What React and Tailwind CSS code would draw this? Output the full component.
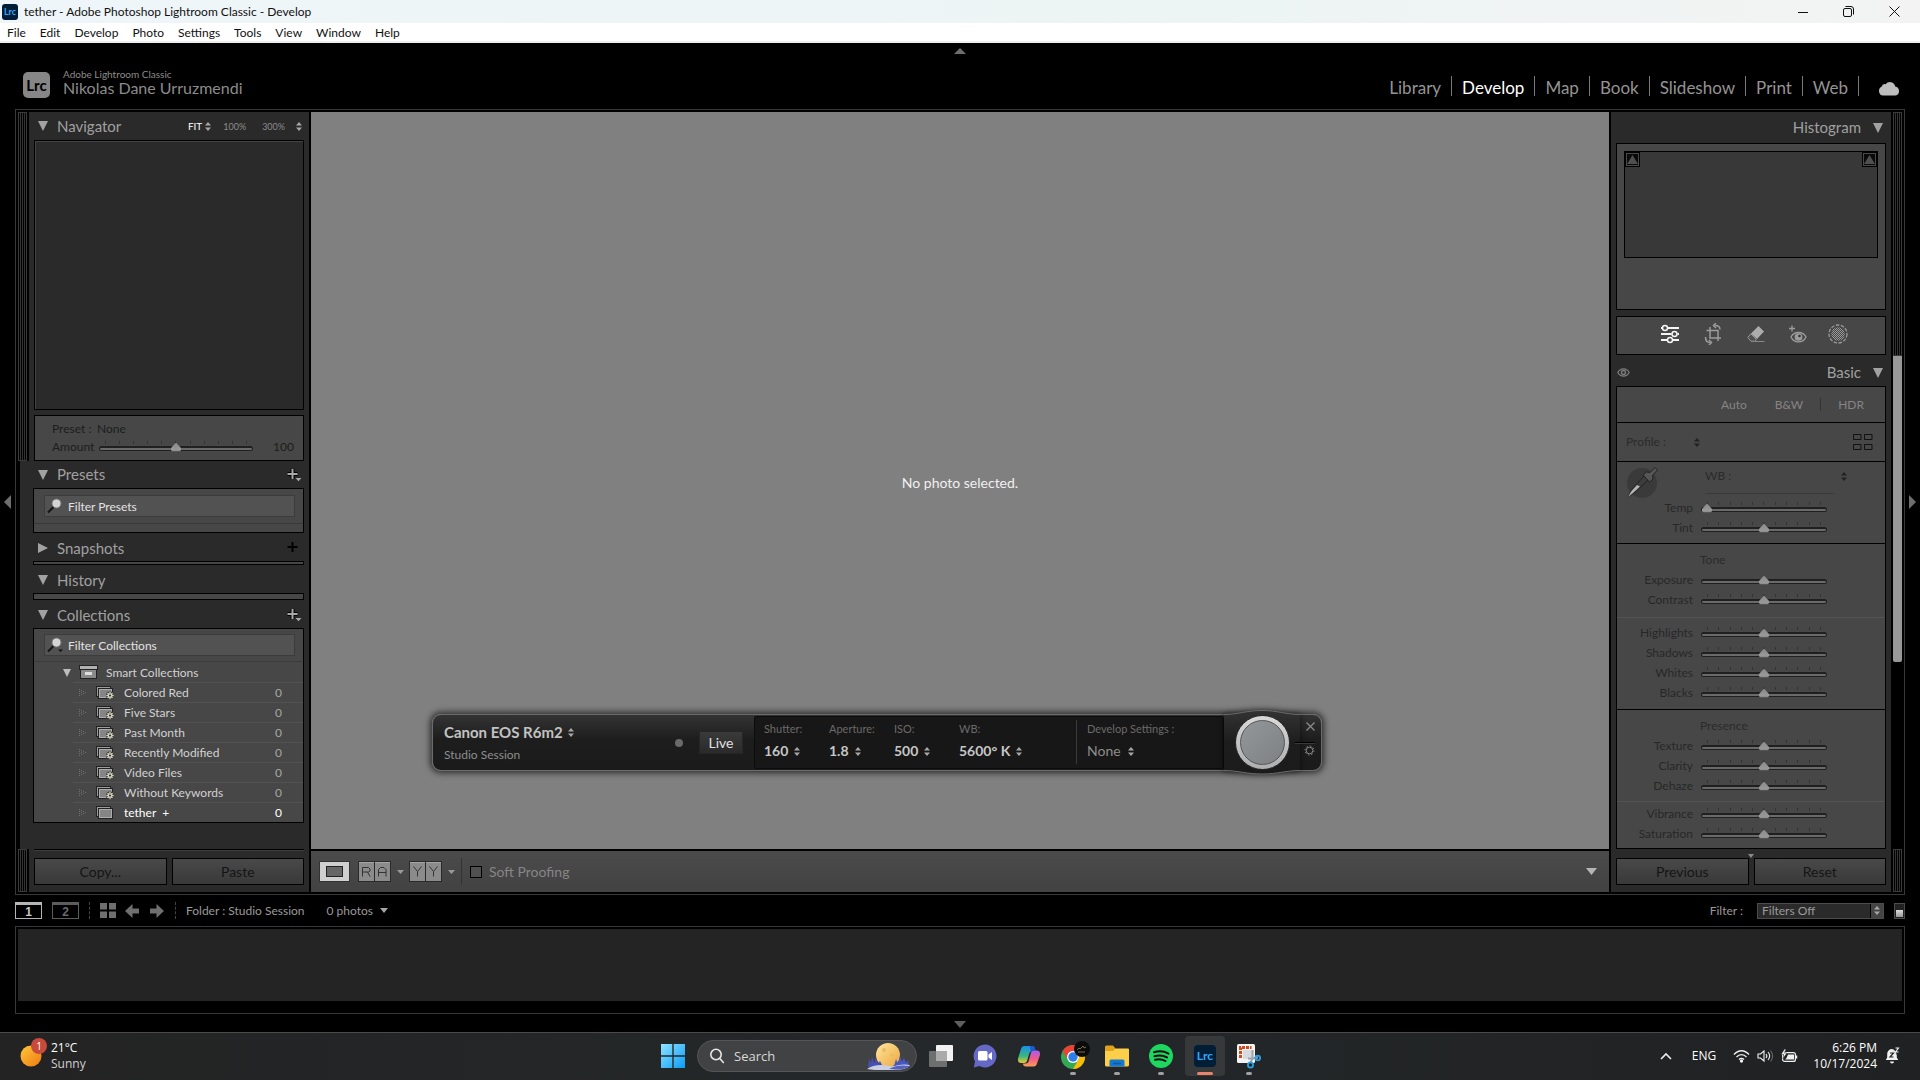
import React from "react";

const MENU = ["File", "Edit", "Develop", "Photo", "Settings", "Tools", "View", "Window", "Help"];
const MODULES = ["Library", "Develop", "Map", "Book", "Slideshow", "Print", "Web"];
const SMART = ["Colored Red", "Five Stars", "Past Month", "Recently Modified", "Video Files", "Without Keywords"];
const TICKS = [0, 1, 2, 3, 4, 5, 6, 7, 8, 9, 10];

function TitleBar() {
  return (
    <div className="flex h-[23px] shrink-0 items-center bg-[linear-gradient(90deg,#eff6f9,#ecf4f4_60%,#f3f3f3)] text-[#111]">
      <span className="ml-[2px] flex size-4 items-center justify-center rounded-[3px] bg-[#001e36] text-[9px] font-bold leading-none text-[#31a8ff]">
        Lrc
      </span>
      <span className="ml-[6px] grow text-[12px] leading-none">tether - Adobe Photoshop Lightroom Classic - Develop</span>
      <div className="flex items-center gap-[35px] pr-5">
        <button aria-label="Minimize">
          <svg width="10" height="10" viewBox="0 0 10 10" stroke="#111"><path d="M0 5.500h10" /></svg>
        </button>
        <button aria-label="Restore">
          <svg width="11" height="11" viewBox="0 0 11 11" fill="none" stroke="#111">
            <rect x=".5" y="2.500" width="8" height="8" rx="1.500" />
            <path d="M2.500 .5h5.500a2.500 2.500 0 0 1 2.500 2.500v5.500" />
          </svg>
        </button>
        <button aria-label="Close">
          <svg width="11" height="11" viewBox="0 0 11 11" stroke="#111"><path d="M.5 .5l10 10M10.500 .5l-10 10" /></svg>
        </button>
      </div>
    </div>
  );
}

function MenuBar() {
  return (
    <nav className="flex h-5 shrink-0 items-center gap-[14px] border-b-2 border-[#efefef] bg-white px-[7px] pt-[2px] text-[12px] leading-none text-[#111]">
      {MENU.map((m) => (
        <button key={m}>{m}</button>
      ))}
    </nav>
  );
}

function Header() {
  return (
    <header className="grid h-[66px] shrink-0 grid-cols-[1fr_auto_1fr] bg-black">
      <div className="flex items-start gap-[13px] pl-[23px] pt-[25px]">
        <span className="mt-1 flex h-[26px] w-[27px] items-center justify-center rounded-[5px] bg-[#868686] text-[15px] font-bold leading-none text-black">
          Lrc
        </span>
        <div className="text-[#8c8c8c]">
          <div className="text-[10px] leading-[12px]">Adobe Lightroom Classic</div>
          <div className="text-[16px] leading-[16px]">Nikolas Dane Urruzmendi</div>
        </div>
      </div>
      <button aria-label="Hide module picker" className="h-4 px-2">
        <svg width="12" height="6" viewBox="0 0 12 6" fill="#6e6e6e"><path d="M6 0l6 6H0z" /></svg>
      </button>
      <div className="flex items-start justify-end pr-5 pt-[33px]">
        {MODULES.map((m) => (
          <div key={m} className="flex h-5 border-r border-[#7a7a7a]">
            <button className={m === "Develop" ? "px-[10px] pt-[2px] text-[17px] leading-[20px] text-white" : "px-[10px] pt-[2px] text-[17px] leading-[20px] text-[#949494]"}>
              {m}
            </button>
          </div>
        ))}
        <button aria-label="Cloud sync" className="ml-[19px] mt-1">
          <svg width="22" height="16" viewBox="0 0 22 16" fill="#bdbdbd">
            <path d="M5 15.500A4.600 4.600 0 0 1 3.600 6.800 3.400 3.400 0 0 1 7.600 4.200 5.400 5.400 0 0 1 17.200 6.500 4.600 4.600 0 0 1 17.500 15.500z" />
          </svg>
        </button>
      </div>
    </header>
  );
}

const Stripes = ({ className }) => (
  <div className={"w-[9px] border border-[#3a3a3a] bg-[repeating-linear-gradient(90deg,#000_0_1px,#333_1px_2px)] " + className} />
);

function Tri({ dir = "down" }) {
  return (
    <svg width="10" height="10" viewBox="0 0 10 10" fill="#a2a2a2">
      {dir === "down" ? <path d="M0 0h10L5 10z" /> : <path d="M0 0l10 5-10 5z" />}
    </svg>
  );
}

function UpDown({ color = "#a8a8a8" }) {
  return (
    <svg width="6" height="9" viewBox="0 0 6 9" fill={color} className="shrink-0">
      <path d="M3 0l3 3.500H0zM3 9L0 5.500h6z" />
    </svg>
  );
}

function Plus({ menu }) {
  return (
    <svg width="16" height="14" viewBox="0 0 16 14">
      {menu && <path d="M6.500 1v10M1.500 6h10" stroke="#000" strokeWidth="4" />}
      <path d="M6.500 1v10M1.500 6h10" stroke={menu ? "#a8a8a8" : "#000"} strokeWidth="2" />
      {menu && <path d="M9.500 10h6l-3 3.300z" fill="#a8a8a8" />}
    </svg>
  );
}

function SectionHead({ title, open = true, children, className = "h-7 pl-[5px] pt-[2px]" }) {
  return (
    <div className={"flex items-center " + className}>
      <button className="flex items-center gap-[9px] text-[15px] leading-none text-[#a0a0a0]">
        <Tri dir={open ? "down" : "right"} />
        {title}
      </button>
      <div className="ml-auto flex items-center">{children}</div>
    </div>
  );
}

function Slider({ label, value = 50, ticks = true, width = "w-[126px]" }) {
  return (
    <div className={"relative h-5 " + width}>
      {ticks && (
        <div className="absolute inset-x-[6px] top-[4px] flex justify-between">
          {TICKS.map((t) => (
            <i key={t} className="h-[3px] w-px bg-[#333]" />
          ))}
        </div>
      )}
      <input
        id={label}
        type="range"
        defaultValue={value}
        className="relative block h-[22px] w-full appearance-none bg-transparent [&::-webkit-slider-runnable-track]:h-[5px] [&::-webkit-slider-runnable-track]:rounded-full [&::-webkit-slider-runnable-track]:border [&::-webkit-slider-runnable-track]:border-t-2 [&::-webkit-slider-runnable-track]:border-[#202020] [&::-webkit-slider-runnable-track]:bg-[#6a6a6a] [&::-webkit-slider-thumb]:-mt-[5px] [&::-webkit-slider-thumb]:h-[9px] [&::-webkit-slider-thumb]:w-[10px] [&::-webkit-slider-thumb]:appearance-none [&::-webkit-slider-thumb]:bg-[linear-gradient(#8a8a8a,#9a9a9a_80%,#555)] [&::-webkit-slider-thumb]:[clip-path:polygon(50%_0,100%_60%,100%_85%,85%_100%,15%_100%,0_85%,0_60%)]"
      />
    </div>
  );
}

function SliderRow({ label, value, ticks }) {
  return (
    <div className="flex h-5 items-center">
      <label htmlFor={label} className="mr-2 w-[76px] text-right text-[12px] leading-none text-[#272727]">
        {label}
      </label>
      <Slider label={label} value={value} ticks={ticks} />
    </div>
  );
}

function FilterField({ label, menu }) {
  return (
    <div className="ml-[10px] mr-2 flex h-[22px] items-center border border-[#3c3c3c] bg-[#525252] pl-[2px]">
      <svg width="16" height="16" viewBox="0 0 16 16" className="shrink-0">
        <path d="M1 14.500l6-6" stroke="#161616" strokeWidth="2.200" />
        <circle cx="9.500" cy="5.500" r="4.500" fill="#d4d4d4" stroke="#777" />
        {menu && <path d="M11 12.500h5l-2.500 2.500z" fill="#111" />}
      </svg>
      <input
        aria-label={label}
        placeholder={label}
        className="ml-[5px] w-0 grow bg-transparent text-[12px] leading-none text-[#e2e2e2] outline-none placeholder:text-[#e2e2e2]"
      />
    </div>
  );
}

function CollectionIcon({ smart }) {
  return (
    <svg width="20" height="15" viewBox="0 0 20 15">
      <rect x=".5" y="1.500" width="14" height="10" fill="#9c9c9c" stroke="#222" />
      <rect x="2.500" y="3.500" width="14" height="10" fill="#858585" stroke="#222" />
      <rect x="3.500" y="4.500" width="12" height="8" fill="none" stroke="#adadad" />
      {smart && (
        <g>
          <circle cx="14" cy="10.500" r="4" fill="#333" />
          <path d="M14 6.800v7.400M10.300 10.500h7.400M11.500 8l5 5M16.500 8l-5 5" stroke="#d6d6c0" strokeWidth="1.300" />
          <circle cx="14" cy="10.500" r="1.100" fill="#333" />
        </g>
      )}
    </svg>
  );
}

function CollectionRow({ name, smart, active }) {
  return (
    <div className="ml-[39px] flex h-5 items-center border-t border-[#525252] pl-[6px] pr-[21px] text-[12px] leading-none">
      <svg width="8" height="8" viewBox="0 0 8 8" fill="#6f6f6f">
        <path d="M0 0h1v1H0zM0 2h1v1H0zM0 4h1v1H0zM0 6h1v1H0zM2 1h1v1H2zM2 3h1v1H2zM2 5h1v1H2zM4 2h1v1H4zM4 4h1v1H4zM6 3h1v1H6z" />
      </svg>
      <span className="ml-[9px] w-7">
        <CollectionIcon smart={smart} />
      </span>
      <span className={active ? "grow text-white" : "grow text-[#d2d2d2]"}>{name}</span>
      <span className={active ? "text-white" : "text-[#a6a6a6]"}>0</span>
    </div>
  );
}

const panelButton =
  "h-[27px] flex-1 border border-black bg-[linear-gradient(#494949,#393939)] text-[14px] leading-none text-[#151515]";

function LeftPanel() {
  return (
    <aside className="flex w-[291px] shrink-0 flex-col bg-black">
      <div className="flex">
        <Stripes className="mr-[2px]" />
        <div className="grow bg-[#2a2a2a] px-[5px]">
          <SectionHead title="Navigator" className="h-7 pl-1">
            <div className="flex items-center pr-[2px] text-[9px] leading-none text-[#8a8a8a]">
              <button className="flex items-center gap-[3px] text-[10px] text-white">
                FIT <UpDown />
              </button>
              <button className="ml-3">100%</button>
              <button className="ml-4 flex items-center gap-[11px]">
                300% <UpDown />
              </button>
            </div>
          </SectionHead>
          <div className="h-[270px] border border-black bg-[#2a2a2a] shadow-[inset_1px_1px_0_#444]" />
          <div className="mt-[5px] flex h-[46px] flex-col border border-black bg-[#474747] pl-[17px] pt-[4px] text-[12px] leading-none text-[#1d1d1d]">
            <div className="flex h-[18px] items-center">
              <span className="w-[45px]">Preset :</span>None
            </div>
            <div className="flex h-[18px] items-center">
              <label htmlFor="Preset amount" className="w-[47px]">Amount</label>
              <Slider label="Preset amount" width="w-[154px]" />
              <span className="ml-5">100</span>
            </div>
          </div>
        </div>
      </div>
      <div className="ml-[2px] grow bg-[#2a2a2a] pl-[13px] pr-[5px]">
        <SectionHead title="Presets" className="h-[27px] pl-[5px]">
          <button aria-label="Add preset" className="pr-[2px]"><Plus menu /></button>
        </SectionHead>
        <div className="h-[45px] border border-black bg-[#474747] pt-[6px]">
          <FilterField label="Filter Presets" />
          <div className="mt-[6px] border-t border-[#393939]" />
        </div>
        <SectionHead title="Snapshots" open={false}>
          <button aria-label="Add snapshot" className="pr-[2px]"><Plus /></button>
        </SectionHead>
        <div className="h-1 border border-black bg-[#474747]" />
        <SectionHead title="History" />
        <div className="h-[7px] border border-black bg-[#474747]" />
        <SectionHead title="Collections">
          <button aria-label="Add collection" className="pr-[2px]"><Plus menu /></button>
        </SectionHead>
        <div className="border border-black bg-[#474747] pt-[5px]">
          <FilterField label="Filter Collections" menu />
          <div className="mt-[5px] flex h-[21px] items-center border-t border-[#3c3c3c] pl-[29px] pt-px text-[12px] leading-none text-[#d2d2d2]">
            <svg width="8" height="8" viewBox="0 0 8 8" fill="#bdbdbd"><path d="M0 0h8L4 8z" /></svg>
            <svg width="19" height="15" viewBox="0 0 19 15" className="ml-[8px] mr-[8px]">
              <rect x=".5" y=".5" width="18" height="4" fill="#b0b0b0" stroke="#222" />
              <rect x="1.500" y="4.500" width="16" height="9" fill="#8a8a8a" stroke="#222" />
              <rect x="6" y="7" width="7" height="3" fill="#ddd" />
            </svg>
            Smart Collections
          </div>
          {SMART.map((n) => (
            <CollectionRow key={n} name={n} smart />
          ))}
          <CollectionRow name={<>tether&nbsp; +</>} active />
        </div>
      </div>
      <div className="flex h-[43px] shrink-0">
        <Stripes className="mr-[2px]" />
        <div className="grow bg-[#2a2a2a] px-[5px]">
          <div className="flex gap-[5px] border-t border-black pt-2 shadow-[inset_0_1px_0_#3c3c3c]">
            <button className={panelButton}>Copy...</button>
            <button className={panelButton}>Paste</button>
          </div>
        </div>
      </div>
    </aside>
  );
}

function TetherValue({ label, value, className, light }) {
  return (
    <div className={"flex flex-col " + className}>
      <span className="text-[11px] leading-[14px] text-[#6a6a6a]">{label}</span>
      <button className={light ? "mt-[6px] flex items-center gap-[7px] text-[14px] leading-[18px] text-[#8d8d8d]" : "mt-[6px] flex items-center gap-[6px] text-[14px] font-bold leading-[18px] text-[#c6c6c6]"}>
        {value} <UpDown />
      </button>
    </div>
  );
}

function TetherBar() {
  return (
    <div className="absolute bottom-[78px] left-[121px] flex h-[57px] w-[890px] rounded-[9px] border border-[#6b6b6b] bg-[linear-gradient(#333,#1d1d1d_45%,#1b1b1b)] shadow-[0_0_6px_2px_rgba(0,0,0,0.65)]">
      <div className="flex w-[321px] items-center pl-[11px] pr-[11px]">
        <div className="flex grow flex-col gap-[6px]">
          <button className="flex items-center gap-[5px] text-[15px] font-bold leading-[18px] text-[#c2c2c2]">
            Canon EOS R6m2 <UpDown />
          </button>
          <span className="text-[12px] leading-[15px] text-[#8d8d8d]">Studio Session</span>
        </div>
        <i className="size-2 rounded-full bg-[#6a6a6a]" />
        <button className="ml-4 h-[23px] w-[44px] border border-[#262626] bg-[linear-gradient(#3a3a3a,#2a2a2a)] text-[14px] leading-none text-[#e0e0e0]">
          Live
        </button>
      </div>
      <div className="my-px flex w-[470px] rounded-[2px] border border-[#0c0c0c] bg-[#171717] pl-[9px] pt-[5px]">
        <TetherValue className="w-[65px]" label="Shutter:" value="160" />
        <TetherValue className="w-[65px]" label="Aperture:" value="1.8" />
        <TetherValue className="w-[65px]" label="ISO:" value="500" />
        <TetherValue className="w-[117px]" label="WB:" value="5600° K" />
        <div className="-mt-[2px] mb-1 mr-[10px] w-px bg-[#3a3a3a]" />
        <TetherValue label="Develop Settings :" value="None" light />
      </div>
      <div className="relative flex grow items-center">
        <svg width="76" height="66" viewBox="0 0 76 66" className="absolute -top-[6px] left-0 drop-shadow-[0_0_3px_rgba(0,0,0,0.6)]">
          <path d="M0 5.500C14 5.500 22 1.500 38 1.500S62 5.500 76 5.500V61.500C62 61.500 54 65 38 65S14 61.500 0 61.500z" fill="url(#bump)" />
          <path d="M0 5.500C14 5.500 22 1.500 38 1.500S62 5.500 76 5.500M76 61.500C62 61.500 54 65 38 65S14 61.500 0 61.500" fill="none" stroke="#6b6b6b" />
          <defs>
            <linearGradient id="bump" x2="0" y2="1">
              <stop stopColor="#333" />
              <stop offset=".5" stopColor="#1d1d1d" />
              <stop offset="1" stopColor="#1b1b1b" />
            </linearGradient>
          </defs>
        </svg>
        <button
          aria-label="Capture"
          className="relative ml-[11px] size-[55px] rounded-full border border-[#2a2a2a] bg-[linear-gradient(#d9d9d9,#aeaeae)] p-1"
        >
          <span className="block size-full rounded-full border border-[#555] bg-[linear-gradient(135deg,#93979a,#7d8184)]" />
        </button>
        <div className="relative mb-2 ml-[5px] flex w-5 flex-col items-end">
          <button aria-label="Close tether bar">
            <svg width="9" height="9" viewBox="0 0 9 9" stroke="#8a8a8a" strokeWidth="1.300"><path d="M.5 .5l8 8M8.500 .5l-8 8" /></svg>
          </button>
          <div className="mb-px mt-[11px] h-[2px] w-full border-b border-[#3a3a3a] bg-black" />
          <button aria-label="Camera settings">
            <svg width="11" height="11" viewBox="0 0 11 11" fill="none" stroke="#8a8a8a">
              <circle cx="5.500" cy="5.500" r="3.300" />
              <circle cx="5.500" cy="5.500" r="4.500" strokeDasharray="1.500 2" />
            </svg>
          </button>
        </div>
      </div>
    </div>
  );
}

const MenuTri = ({ color = "#9a9a9a" }) => (
  <svg width="7" height="4" viewBox="0 0 7 4" fill={color}><path d="M0 0h7L3.500 4z" /></svg>
);

function SplitIcon({ kind }) {
  const glyph = kind === "RA"
    ? "M4.500 15.500V6.500H10.500L12 8V10L10.500 11H4.500M9.500 11L12 15.500M20.500 15.500V8.500L22.500 6.500H26L28 8.500V15.500M20.500 11.500H28"
    : "M4.500 5.500L8.500 10.500L12.500 5.500M8.500 10.500V15.500M20.500 5.500L24.500 10.500L28.500 5.500M24.500 10.500V15.500";
  return (
    <svg width="33" height="21" viewBox="0 0 33 21">
      <rect x=".5" y=".5" width="32" height="20" fill="#8b8b8b" stroke="#2a2a2a" />
      <path d="M1 1.500h31" stroke="#a5a5a5" />
      <path d="M16.500 0v21" stroke="#2a2a2a" />
      <path d={glyph} fill="none" stroke="#333" />
    </svg>
  );
}

function Canvas() {
  return (
    <main className="relative mx-[2px] flex grow flex-col">
      <div className="flex grow items-center justify-center bg-[#808080] pt-[5px] text-[14px] leading-none text-[#f0f0f0]">
        No photo selected.
      </div>
      <div className="relative h-0">
        <TetherBar />
      </div>
      <div className="mt-[2px] flex h-[41px] shrink-0 items-center bg-[linear-gradient(#4b4b4b,#424242)] pl-2">
        <button aria-label="Loupe view">
          <svg width="31" height="21" viewBox="0 0 31 21">
            <rect x=".5" y=".5" width="30" height="20" fill="#cfcfcf" stroke="#333" />
            <rect x="7.500" y="5.500" width="16" height="10" fill="#666" stroke="#222" />
          </svg>
        </button>
        <button aria-label="Reference view" className="ml-2"><SplitIcon kind="RA" /></button>
        <button aria-label="Reference view options" className="ml-[6px]"><MenuTri /></button>
        <button aria-label="Before and after" className="ml-[5px]"><SplitIcon kind="YY" /></button>
        <button aria-label="Before and after options" className="ml-[6px]"><MenuTri /></button>
        <i className="ml-[6px] h-[27px] w-px bg-[#333]" />
        <label className="ml-2 flex items-center gap-[7px] text-[14px] leading-none text-[#868686]">
          <input type="checkbox" className="size-3 appearance-none border border-black bg-[#505050]" />
          Soft Proofing
        </label>
        <button aria-label="Toolbar options" className="ml-auto mr-3">
          <svg width="11" height="7" viewBox="0 0 11 7" fill="#b5b5b5"><path d="M0 0h11L5.500 7z" /></svg>
        </button>
      </div>
    </main>
  );
}

const ClipMark = () => (
  <button aria-label="Clipping" className="flex size-[15px] items-center justify-center border border-black bg-[#0a0a0a] shadow-[inset_0_0_0_1px_#4a4a4a]">
    <svg width="11" height="9" viewBox="0 0 11 9" fill="#4f4f4f"><path d="M5.500 0L11 9H0z" /></svg>
  </button>
);

const Eye = () => (
  <svg width="13" height="9" viewBox="0 0 13 9" fill="none" stroke="#7d7d7d">
    <path d="M.8 4.500C3.500 -.3 9.500 -.3 12.200 4.500 9.500 9.300 3.500 9.300 .8 4.500z" strokeWidth="1.200" />
    <circle cx="6.500" cy="4.500" r="2" strokeWidth="1.400" />
  </svg>
);

function RightHead({ title, eye, className }) {
  return (
    <div className={"flex items-center pr-[3px] " + className}>
      {eye && <button aria-label="Toggle panel" className="pl-px"><Eye /></button>}
      <button className="ml-auto flex items-center gap-[12px] text-[15px] leading-none text-[#a0a0a0]">
        {title} <Tri />
      </button>
    </div>
  );
}

function ToolStrip() {
  return (
    <div className="mt-[6px] flex h-[39px] items-center border border-black bg-[#474747] pb-[3px] pl-[43px]">
      <button aria-label="Edit">
        <svg width="20" height="20" viewBox="0 0 20 20" fill="none" stroke="#f4f4f4" strokeWidth="2">
          <path d="M1 4h1.500M8 4h11M1 10h10.500M17.500 10h1.500M1 16h6M13 16h6" />
          <circle cx="5" cy="4" r="2.500" strokeWidth="1.500" />
          <circle cx="14.500" cy="10" r="2.500" strokeWidth="1.500" />
          <circle cx="10" cy="16" r="2.500" strokeWidth="1.500" />
        </svg>
      </button>
      <button aria-label="Crop" className="ml-[24px]">
        <svg width="20" height="22" viewBox="0 0 20 22" fill="none" stroke="#9c9c9c" strokeWidth="1.500">
          <path d="M6 4v11h11M2.500 7.500h11.500v10.500" />
          <path d="M11 2.500c3 0 5 1 5 4" />
          <path d="M12 0L9.500 2.500 12 5" />
          <path d="M1.500 14c0 4 1.500 5.500 4.500 5.500" />
          <path d="M5 17l2.500 2.500L5 22" />
        </svg>
      </button>
      <button aria-label="Remove" className="ml-[22px]">
        <svg width="20" height="20" viewBox="0 0 20 20">
          <path d="M12.500 2l5.500 5.500-7 7.500L5 9.500z" fill="#acacac" />
          <path d="M4.800 9.800l5.600 5.400-1.600 2.100H5L1.800 13.500z" fill="#505050" stroke="#999" />
          <path d="M9 17.500h9.500" stroke="#888" />
        </svg>
      </button>
      <button aria-label="Red eye" className="ml-[23px]">
        <svg width="18" height="20" viewBox="0 0 18 20" fill="none" stroke="#9c9c9c" strokeWidth="1.300">
          <path d="M0 4.500h6M3 1.500v6" />
          <path d="M2 13C5 7 14 7 17 13 14 19.500 5 19.500 2 13z" />
          <circle cx="9.500" cy="13" r="3.200" fill="#9c9c9c" />
          <circle cx="10.500" cy="12" r="1.300" fill="#333" stroke="none" />
        </svg>
      </button>
      <button aria-label="Masking" className="ml-[20px]">
        <svg width="22" height="22" viewBox="0 0 22 22">
          <defs>
            <pattern id="mask" width="2" height="2" patternUnits="userSpaceOnUse">
              <path d="M0 0h1v1H0zM1 1h1v1H1z" fill="#999" />
            </pattern>
          </defs>
          <circle cx="11" cy="11" r="9" fill="none" stroke="#9a9a9a" strokeWidth="1.300" strokeDasharray="3.500 1.500" />
          <circle cx="11" cy="11" r="6.800" fill="url(#mask)" />
        </svg>
      </button>
    </div>
  );
}

function Dropper() {
  return (
    <svg width="32" height="32" viewBox="0 0 32 32">
      <circle cx="16" cy="17" r="15" fill="#3a3a3a" />
      <path d="M18 10l4 4L8 27l-6 4 3.500-7z" fill="#3d3d3d" stroke="#222" />
      <path d="M11 19l3 1.500L7 27l-5 4 3.500-6z" fill="#b4b4b4" />
      <path d="M17 9l3.500-3 3.500.5L29 1.500l2.500 2.500-5 5.500.5 3.500-3.500 3z" fill="#555" stroke="#222" />
    </svg>
  );
}

function BasicPanel() {
  return (
    <div className="border border-black bg-[#474747] text-[12px] leading-none text-[#2b2b2b]">
      <div className="flex h-[35px] items-center justify-end pr-[21px] text-[#858585]">
        <button>Auto</button>
        <button className="ml-[28px]">B&amp;W</button>
        <i className="ml-[17px] h-[13px] w-px bg-[#333]" />
        <button className="ml-[17px]">HDR</button>
      </div>
      <div className="flex h-[39px] items-center border-t border-black pl-[9px] pr-[12px]">
        <span className="w-[68px]">Profile :</span>
        <UpDown color="#222" />
        <button aria-label="Profile browser" className="ml-auto">
          <svg width="20" height="17" viewBox="0 0 20 17" fill="none" stroke="#111">
            <path d="M.5 .5h7.500v5H.5zM11.500 .5h7.500v5h-7.500zM.5 10.500h7.500v5H.5zM11.500 10.500h7.500v5h-7.500z" />
          </svg>
        </button>
      </div>
      <div className="border-t border-black pb-[5px]">
        <div className="flex h-9 items-start pl-[9px] pr-[37px]">
          <button aria-label="White balance selector" className="mt-1"><Dropper /></button>
          <div className="ml-[47px] flex h-[32px] grow items-center justify-between border-b border-[#3a3a3a] pb-1">
            WB :
          </div>
          <span className="ml-[7px] mt-[10px] w-[7px]"><UpDown color="#222" /></span>
        </div>
        <SliderRow label="Temp" value={0} />
        <SliderRow label="Tint" />
      </div>
      <div className="border-t border-black pt-[6px]">
        <div className="flex h-5 items-center pl-[83px]">Tone</div>
        <SliderRow label="Exposure" ticks={false} />
        <SliderRow label="Contrast" />
        <div className="mb-[5px] mt-[7px] border-t border-[#535353]" />
        {["Highlights", "Shadows", "Whites", "Blacks"].map((s) => (
          <SliderRow key={s} label={s} />
        ))}
      </div>
      <div className="mt-[6px] border-t border-black pb-[4px] pt-[6px]">
        <div className="flex h-5 items-center pl-[83px]">Presence</div>
        {["Texture", "Clarity", "Dehaze"].map((s) => (
          <SliderRow key={s} label={s} />
        ))}
        <div className="mb-[2px] mt-[5px] border-t border-[#535353]" />
        <SliderRow label="Vibrance" />
        <SliderRow label="Saturation" />
      </div>
    </div>
  );
}

function RightPanel() {
  return (
    <aside className="flex w-[291px] shrink-0 bg-black">
      <div className="flex grow flex-col bg-[#2a2a2a] px-[5px]">
        <RightHead title="Histogram" className="h-[31px]" />
        <div className="h-[167px] border border-black bg-[#474747] p-[7px]">
          <div className="flex h-[107px] items-start justify-between border border-black bg-[#383838]">
            <ClipMark />
            <ClipMark />
          </div>
        </div>
        <ToolStrip />
        <RightHead title="Basic" eye className="h-[31px] pt-[4px]" />
        <BasicPanel />
        <div className="mt-auto flex h-[42px] flex-col items-center pt-[4px]">
          <svg width="6" height="4" viewBox="0 0 6 4" fill="#8a8a8a"><path d="M0 0h6L3 4z" /></svg>
          <div className="flex w-full gap-[5px]">
            <button className={panelButton}>Previous</button>
            <button className={panelButton}>Reset</button>
          </div>
        </div>
      </div>
      <div className="ml-[2px] flex w-[9px] flex-col">
        <Stripes className="h-[244px]" />
        <div className="h-[306px] rounded-b-[2px] bg-[#989898]" />
        <div className="grow" />
        <Stripes className="h-[43px]" />
      </div>
    </aside>
  );
}

function Workspace() {
  return (
    <div className="flex grow bg-black">
      <button aria-label="Hide left panel" className="flex w-[15px] shrink-0 items-center justify-end pr-1">
        <svg width="7" height="14" viewBox="0 0 7 14" fill="#6e6e6e"><path d="M7 0v14L0 7z" /></svg>
      </button>
      <div className="flex grow border border-[#383838] p-[2px]">
        <LeftPanel />
        <Canvas />
        <RightPanel />
      </div>
      <button aria-label="Hide right panel" className="flex w-[15px] shrink-0 items-center pl-1">
        <svg width="7" height="14" viewBox="0 0 7 14" fill="#6e6e6e"><path d="M0 0v14l7-7z" /></svg>
      </button>
    </div>
  );
}

function WindowButton({ n, active }) {
  return (
    <button className={active ? "flex h-[17px] w-[27px] items-center justify-center border border-t-[3px] border-[#b5b5b5] font-['Liberation_Sans',sans-serif] text-[12px] font-bold leading-none text-[#c8c8c8]" : "flex h-[17px] w-[27px] items-center justify-center border border-t-[3px] border-[#5c5c5c] font-['Liberation_Sans',sans-serif] text-[12px] font-bold leading-none text-[#6a6a6a]"}>
      {n}
    </button>
  );
}

function Filmstrip() {
  return (
    <div className="shrink-0 bg-black px-[15px]">
      <div className="flex h-[31px] items-center text-[12px] leading-none text-[#9a9a9a]">
        <WindowButton n="1" active />
        <span className="w-[10px]" />
        <WindowButton n="2" />
        <i className="ml-[10px] h-[17px] border-l border-dashed border-[#444]" />
        <button aria-label="Grid view" className="ml-[10px]">
          <svg width="16" height="15" viewBox="0 0 16 15" fill="#6f6f6f"><path d="M0 0h7v6.500H0zM9 0h7v6.500H9zM0 8.500h7V15H0zM9 8.500h7V15H9z" /></svg>
        </button>
        <button aria-label="Go back" className="ml-[9px]">
          <svg width="14" height="14" viewBox="0 0 14 14" fill="#6f6f6f"><path d="M7.500 0v4.500H14v5H7.500V14L0 7z" /></svg>
        </button>
        <button aria-label="Go forward" className="ml-[11px]">
          <svg width="14" height="14" viewBox="0 0 14 14" fill="#6f6f6f"><path d="M6.500 0v4.500H0v5h6.500V14L14 7z" /></svg>
        </button>
        <i className="ml-[11px] h-[17px] border-l border-dashed border-[#444]" />
        <span className="ml-[10px]">Folder : Studio Session</span>
        <button className="ml-[22px] flex items-center gap-[7px]">
          0 photos
          <svg width="8" height="5" viewBox="0 0 8 5" fill="#a5a5a5"><path d="M0 0h8L4 5z" /></svg>
        </button>
        <label htmlFor="filter" className="ml-auto mr-[14px]">Filter :</label>
        <div className="flex h-4 w-[127px] border border-[#4c4c4c] bg-[#2a2a2a]">
          <select id="filter" className="grow appearance-none bg-transparent pl-1 text-[12px] leading-none text-[#9a9a9a]">
            <option>Filters Off</option>
          </select>
          <span className="flex w-[13px] items-center justify-center border-l border-black bg-[#444]"><UpDown /></span>
        </div>
        <button aria-label="Filter switch" className="ml-[10px] flex h-4 w-[11px] items-end border border-[#4c4c4c] bg-[#222] p-px">
          <i className="h-[7px] w-full bg-[linear-gradient(#ddd,#999)]" />
        </button>
      </div>
      <div className="h-[88px] border border-[#383838] px-[2px] pt-[2px]">
        <div className="h-[72px] bg-[#242424]" />
      </div>
      <div className="flex h-[18px] items-center justify-center pt-[3px]">
        <button aria-label="Hide filmstrip">
          <svg width="12" height="7" viewBox="0 0 12 7" fill="#5e5e5e" className="block"><path d="M0 0h12L6 7z" /></svg>
        </button>
      </div>
    </div>
  );
}

function TaskItem({ label, running, active, children }) {
  return (
    <div className="flex h-full w-11 items-center justify-center">
      <button
        aria-label={label}
        className={
          active
            ? "relative flex h-10 w-10 items-center justify-center rounded-[4px] bg-[#363839]"
            : "relative flex h-10 w-10 items-center justify-center"
        }
      >
        {children}
        {running && (
          <i className={active ? "absolute bottom-px h-[3px] w-4 rounded-full bg-[#e8846c]" : "absolute bottom-px h-[3px] w-[6px] rounded-full bg-[#a0a0a0]"} />
        )}
      </button>
    </div>
  );
}

function SearchBox() {
  return (
    <div className="mx-[2px] flex h-8 w-[220px] items-center rounded-full border border-[#555] bg-[#404244] pl-[11px] pr-[5px]">
      <svg width="16" height="16" viewBox="0 0 16 16" fill="none" stroke="#e6e6e6" strokeWidth="1.600" className="shrink-0">
        <circle cx="7" cy="6.500" r="5.200" />
        <path d="M10.800 10.500l4 4.500" />
      </svg>
      <input
        aria-label="Search"
        placeholder="Search"
        className="ml-[9px] w-0 grow bg-transparent text-[13px] leading-none text-white outline-none placeholder:text-[#d8d8d8]"
      />
      <svg width="44" height="28" viewBox="0 0 44 28" className="shrink-0">
        <defs>
          <linearGradient id="moon" x2="1" y2="1">
            <stop stopColor="#ffe7a0" />
            <stop offset="1" stopColor="#eca63c" />
          </linearGradient>
        </defs>
        <circle cx="21" cy="13" r="12" fill="url(#moon)" />
        <circle cx="17" cy="8" r="2" fill="#e9bb60" />
        <circle cx="25" cy="13" r="1.500" fill="#e9bb60" />
        <path d="M1 25l1-8 2 4 1-6 2 6 2-5 2 6 2-3 2 4 3 1z" fill="#4650b4" />
        <path d="M27 24l2-7 2 5 2-8 2 6 2-4 2 5 2-3 1 7z" fill="#4a58c4" />
        <path d="M0 27c5-4 15-5 22-3 7 1 12-3 21-1-2 4-8 5-21 5-12 0-18 0-22-1z" fill="#c9d0e4" />
        <path d="M22 27c6-4 14-4 21-3-3 3-12 4-21 3z" fill="#5662c0" />
      </svg>
    </div>
  );
}

function Taskbar() {
  return (
    <footer className="grid h-12 shrink-0 grid-cols-[1fr_auto_1fr] items-center border-t border-[#4a4a4a] bg-[linear-gradient(90deg,#232323,#24282a_50%,#202122)] pb-[2px] font-['Open_Sans',sans-serif] text-[12px] text-white">
      <button className="flex items-center gap-1 pl-[19px] text-left">
        <span className="relative block size-7">
          <svg width="28" height="28" viewBox="0 0 28 28">
            <defs>
              <linearGradient id="sun" x2="1" y2="1">
                <stop stopColor="#ffc83a" />
                <stop offset="1" stopColor="#ee7a10" />
              </linearGradient>
            </defs>
            <circle cx="12" cy="14" r="10.500" fill="url(#sun)" />
          </svg>
          <span className="absolute -top-1 right-0 flex size-4 items-center justify-center rounded-full bg-[#c84a3c] text-[10px] leading-none">1</span>
        </span>
        <span className="leading-4">
          21°C
          <br />
          <span className="text-[#d0d0d0]">Sunny</span>
        </span>
      </button>
      <div className="flex h-full items-center pl-[2px]">
        <TaskItem label="Start">
          <svg width="24" height="24" viewBox="0 0 24 24">
            <defs>
              <linearGradient id="win" x2="1" y2="1">
                <stop stopColor="#8fe4ff" />
                <stop offset="1" stopColor="#0a9bf5" />
              </linearGradient>
            </defs>
            <path d="M0 0h11.300v11.300H0zM12.700 0H24v11.300H12.700zM0 12.700h11.300V24H0zM12.700 12.700H24V24H12.700z" fill="url(#win)" />
          </svg>
        </TaskItem>
        <SearchBox />
        <TaskItem label="Task view">
          <svg width="24" height="24" viewBox="0 0 24 24">
            <rect x="7" y="1" width="17" height="16" rx="1" fill="#f2f2f2" />
            <rect x="0" y="7" width="18" height="16" rx="1" fill="#777" fillOpacity=".9" />
            <rect x="7" y="7" width="11" height="10" fill="#aaa" />
          </svg>
        </TaskItem>
        <TaskItem label="Chat">
          <svg width="24" height="24" viewBox="0 0 24 24">
            <path d="M12 .5A11.500 11.500 0 1 1 6.500 22.100L.8 23.500 2 17.500A11.500 11.500 0 0 1 12 .5z" fill="#6668c8" />
            <rect x="5" y="7" width="9.500" height="9.500" rx="1.500" fill="#fff" />
            <path d="M15.500 10.500L19 8v8l-3.500-2.500z" fill="#fff" />
          </svg>
        </TaskItem>
        <TaskItem label="Copilot">
          <svg width="24" height="24" viewBox="0 0 24 24">
            <defs>
              <linearGradient id="cpa" x2="0" y2="1">
                <stop stopColor="#1a8fe8" />
                <stop offset=".6" stopColor="#37b87f" />
                <stop offset="1" stopColor="#f2c52c" />
              </linearGradient>
              <linearGradient id="cpb" x2="0" y2="1">
                <stop stopColor="#a75df0" />
                <stop offset=".5" stopColor="#f0598c" />
                <stop offset="1" stopColor="#fb9c55" />
              </linearGradient>
            </defs>
            <path d="M7.500 2H15c2 0 2.500 1 3 3l.5 2h-3c-2 0-2.800 1-3.300 2.700L10 17c-.5 1.300-1.200 2-3 2H4C1 19 .5 16 1.300 13.500l2.700-8.500C4.600 3 5.500 2 7.500 2z" fill="url(#cpa)" />
            <path d="M16.500 22.500H9c-2 0-2.700-1-3.200-3h2.700c2 0 2.800-1 3.300-2.700L14 8.500c.5-1.300 1.200-2 3-2h3c3 0 3.500 3 2.700 5.500L20 19.500c-.6 2-1.500 3-3.500 3z" fill="url(#cpb)" />
            <path d="M12.800 2H15c2 0 2.500 1 3 3l.5 1.700H17c-1.800 0-2.500.7-3 2z" fill="#2156d8" />
          </svg>
        </TaskItem>
        <TaskItem label="Chrome" running>
          <svg width="34" height="30" viewBox="0 0 34 30" className="shrink-0">
            <circle cx="17" cy="16" r="12" fill="#34a853" />
            <path d="M6.600 10A12 12 0 0 1 27.400 10H17a6 6 0 0 0-5.200 9z" fill="#ea4335" />
            <path d="M27.400 10A12 12 0 0 1 17 28l5.200-9A6 6 0 0 0 17 10z" fill="#fbbc05" />
            <circle cx="17" cy="16" r="6" fill="#fff" />
            <circle cx="17" cy="16" r="4.700" fill="#2f7de9" />
            <circle cx="26" cy="8" r="8" fill="#0b0b0b" />
            <path d="M21 9l2-2 1 1 3-3 1 2 2-1M22 11h7" stroke="#8f8a60" strokeWidth=".8" fill="none" />
          </svg>
        </TaskItem>
        <TaskItem label="File Explorer" running>
          <svg width="24" height="24" viewBox="0 0 24 24">
            <path d="M0 3a1.500 1.500 0 0 1 1.500-1.500H8l2.500 3V8H0z" fill="#e0a31c" />
            <path d="M0 7h8l2.500-2.500H23a1 1 0 0 1 1 1V21a1.500 1.500 0 0 1-1.500 1.500h-21A1.500 1.500 0 0 1 0 21z" fill="#fccf4a" />
            <path d="M4.500 22.500V17A1.500 1.500 0 0 1 6 15.500h12a1.500 1.500 0 0 1 1.500 1.500v5.500z" fill="#1478cf" />
            <path d="M8 19.500h8" stroke="#0c5aa3" strokeWidth="1.500" />
          </svg>
        </TaskItem>
        <TaskItem label="Spotify" running>
          <svg width="24" height="24" viewBox="0 0 24 24">
            <circle cx="12" cy="12" r="12" fill="#1ed760" />
            <path d="M5 8.300c5-1.500 10.500-1 14.500 1.300M5.500 12.200c4.500-1.200 9-.8 12.500 1.200M6 15.800c3.800-.9 7.300-.6 10.500 1.200" fill="none" stroke="#111" strokeWidth="2" strokeLinecap="round" />
          </svg>
        </TaskItem>
        <TaskItem label="Lightroom Classic" running active>
          <span className="flex size-[22px] items-center justify-center rounded-[4px] bg-[#001e36] font-['Lato',sans-serif] text-[12px] font-bold leading-none text-[#31a8ff]">
            Lrc
          </span>
        </TaskItem>
        <TaskItem label="Snipping Tool" running>
          <svg width="24" height="26" viewBox="0 0 24 26">
            <rect x="0" y="1" width="18" height="19" rx="1.500" fill="#f4f4f4" />
            <path d="M3.500 15V4.500h11" fill="none" stroke="#cf4a1c" strokeWidth="3" strokeDasharray="3 1" />
            <rect x="6" y="7" width="9" height="9" fill="#d9dadd" />
            <path d="M15.500 7v8l-2 5M11 15.500h5l5-1" stroke="#9aa4ad" strokeWidth="2" fill="none" />
            <circle cx="13.500" cy="22" r="2.600" fill="none" stroke="#2a9fe0" strokeWidth="1.800" />
            <circle cx="20.800" cy="15" r="2.400" fill="none" stroke="#2a9fe0" strokeWidth="1.800" />
          </svg>
        </TaskItem>
      </div>
      <div className="flex items-center justify-end pr-[20px]">
        <button aria-label="Show hidden icons">
          <svg width="12" height="8" viewBox="0 0 12 8" fill="none" stroke="#eee" strokeWidth="1.600"><path d="M1 7l5-5 5 5" /></svg>
        </button>
        <span className="ml-5">ENG</span>
        <button aria-label="Network, sound and battery" className="ml-[17px] flex items-center gap-[7px]">
          <svg width="17" height="14" viewBox="0 0 17 14" fill="none" stroke="#f0f0f0" strokeWidth="1.300">
            <path d="M1 5.500c4.500-5 10.500-5 15 0M3.500 8c3-3.300 7-3.300 10 0M6 10.500c1.500-1.600 3.500-1.600 5 0" />
            <circle cx="8.500" cy="12" r="1" fill="#f0f0f0" />
          </svg>
          <svg width="17" height="14" viewBox="0 0 17 14" fill="none" stroke="#f0f0f0" strokeWidth="1.100">
            <path d="M1 5v4h2.500L7 12V2L3.500 5zM9 5c1 1.200 1 2.800 0 4M11 3c2 2.400 2 5.600 0 8" />
            <path d="M13.500 1.500c2.500 3.300 2.500 7.700 0 11" stroke="#666" />
          </svg>
          <svg width="17" height="14" viewBox="0 0 17 14">
            <rect x="1.600" y="3.600" width="12.800" height="8.800" rx="2" fill="none" stroke="#f0f0f0" strokeWidth="1.200" />
            <path d="M7 5.500h6v5H4l1.500-1.500z" fill="#f0f0f0" />
            <path d="M15.500 6.500v3" stroke="#f0f0f0" strokeWidth="1.500" />
            <path d="M3.500 0L0 5.500h2.500L2 9.500 6 4H3.500L5 0z" fill="#f0f0f0" stroke="#222" strokeWidth=".5" />
          </svg>
        </button>
        <span className="ml-[15px] text-right leading-4">
          6:26 PM
          <br />
          10/17/2024
        </span>
        <button aria-label="Notifications" className="ml-2">
          <svg width="15" height="17" viewBox="0 0 15 17">
            <path d="M7 2a4.800 4.800 0 0 0-4.800 4.800v3.700L.8 13h12.400l-1.400-2.500V8.500" fill="#f2f2f2" />
            <path d="M7 2c2 0 4 2 4.800 7z" fill="#f2f2f2" />
            <path d="M5 14.500h4a2 2 0 0 1-4 0z" fill="#f2f2f2" />
            <path d="M5 6h3.500L5 10h3.500" stroke="#222" strokeWidth="1.200" fill="none" />
            <path d="M10.500 1h3l-3 4h3" stroke="#f2f2f2" strokeWidth="1.100" fill="none" />
          </svg>
        </button>
      </div>
    </footer>
  );
}

export default function App() {
  return (
    <div className="flex min-h-screen flex-col bg-black font-['Lato','Noto_Sans',sans-serif]">
      <TitleBar />
      <MenuBar />
      <Header />
      <Workspace />
      <Filmstrip />
      <Taskbar />
    </div>
  );
}
